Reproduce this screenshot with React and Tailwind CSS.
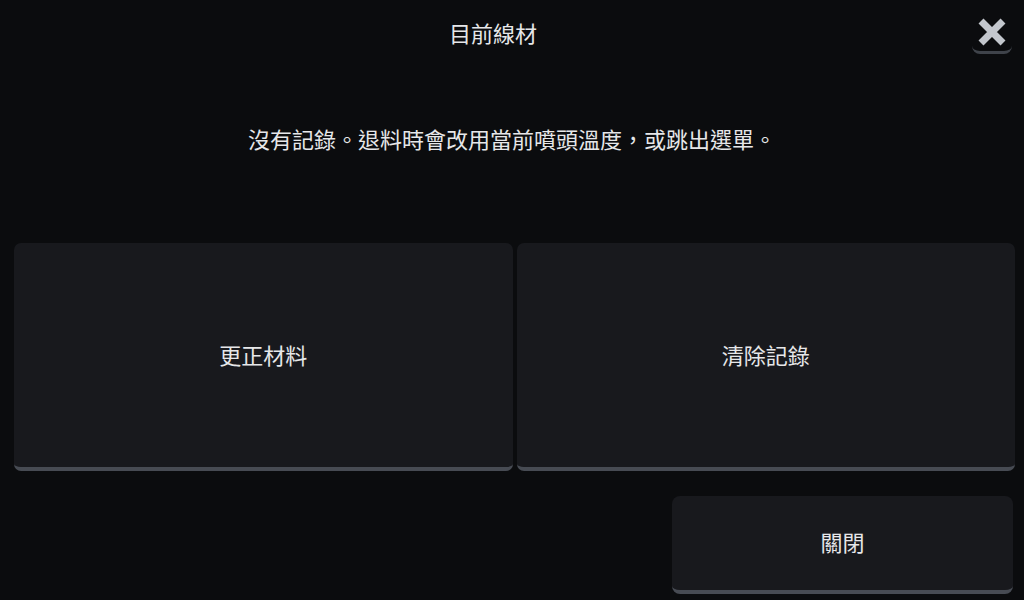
import React from "react";

const font = { fontFamily: '"Noto Sans CJK TC", "Noto Sans", sans-serif' };

const CloseIcon = () => (
  <svg width="28" height="28" viewBox="0 0 28 28">
    <path d="M3 3 L25 25 M25 3 L3 25" stroke="#c3c7cd" strokeWidth="7" />
  </svg>
);

const App = () => {
  return (
    <div
      className="w-[1024px] h-[600px] bg-[#0b0c0e] text-[#e6e7e9] flex flex-col overflow-hidden"
      style={font}
    >
      {/* header */}
      <div className="h-[63px] flex items-center">
        <p className="flex-1 pl-[14px] text-center text-[22px] leading-[28px]">目前線材</p>
        <div className="w-[52px] self-start pt-[12px]">
          <button className="w-[40px] h-[42px] flex items-center justify-center rounded-[8px] border-b-[3px] border-[#3f434a]">
            <CloseIcon />
          </button>
        </div>
      </div>

      {/* message */}
      <p className="mt-[61px] text-center text-[22px] leading-[28px]">
        沒有記錄。退料時會改用當前噴頭溫度，或跳出選單。
      </p>

      {/* actions */}
      <div className="mt-[91px] pl-[14px] pr-[9px] grid grid-cols-2 gap-[4px]">
        <button className="h-[228px] pb-[2px] rounded-[7px] bg-[#18191d] border-b-[4px] border-[#474b53] text-[22px]">
          更正材料
        </button>
        <button className="h-[228px] pb-[2px] rounded-[7px] bg-[#18191d] border-b-[4px] border-[#474b53] text-[22px]">
          清除記錄
        </button>
      </div>

      <div className="mt-[25px] flex justify-end pr-[11px]">
        <button className="w-[341px] h-[98px] pb-[4px] rounded-[8px] bg-[#18191d] border-b-[4px] border-[#474b53] text-[22px]">
          關閉
        </button>
      </div>
    </div>
  );
};

export default App;
